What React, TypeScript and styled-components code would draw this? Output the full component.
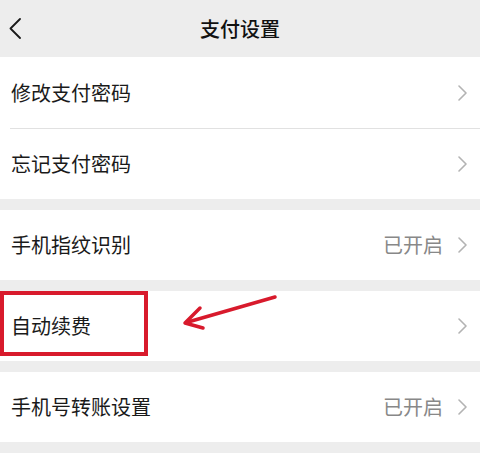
import React from 'react';
import styled, { createGlobalStyle } from 'styled-components';

const GlobalStyle = createGlobalStyle`
    html, body {
        margin: 0;
        padding: 0;
        background-color: #ffffff;
        font-family: "Noto Sans CJK SC", "Noto Sans", sans-serif;
    }
`;

const Page = styled.div`
    width: 480px;
    background-color: #ededed;
    padding-bottom: 11px;
`;

const Header = styled.div`
    height: 57px;
    display: grid;
    grid-template-columns: 1fr auto 1fr;
    align-items: center;
    background-color: #ededed;
`;

const BackButton = styled.div`
    display: flex;
    align-items: center;
    padding-left: 9px;
    height: 100%;
`;

const Title = styled.div`
    font-size: 20px;
    font-weight: 500;
    color: #111111;
    line-height: 1;
`;

const Group = styled.div`
    background-color: #ffffff;
    & + & {
        margin-top: 11px;
    }
`;

const Divider = styled.div`
    height: 1px;
    margin-left: 10px;
    background-color: #e1e1e1;
`;

const Row = styled.div<{ $first?: boolean }>`
    position: relative;
    height: ${(p) => (p.$first ? 71 : 70)}px;
    display: flex;
    align-items: center;
    padding: 0 13px 0 11px;
`;

const Label = styled.div`
    flex: 1;
    font-size: 20px;
    color: #1a1a1a;
    line-height: 1;
`;

const Status = styled.div`
    font-size: 20px;
    color: #888888;
    line-height: 1;
    margin-right: 15px;
`;

const Highlight = styled.div`
    position: absolute;
    left: 0;
    top: 0;
    width: 148px;
    height: 65px;
    box-sizing: border-box;
    border: 4px solid #d81a2c;
`;

const ArrowMark = styled.svg`
    position: absolute;
    left: 0;
    top: 0;
    pointer-events: none;
`;

const Chevron = () => (
    <svg width="9" height="16" viewBox="0 0 9 16">
        <polyline
            points="1,1 8,8 1,15"
            fill="none"
            stroke="#b3b3b3"
            strokeWidth="1.6"
            strokeLinecap="round"
            strokeLinejoin="round"
        />
    </svg>
);

const BackIcon = () => (
    <svg width="12" height="21" viewBox="0 0 12 21">
        <polyline
            points="11,1 1.5,10.5 11,20"
            fill="none"
            stroke="#1a1a1a"
            strokeWidth="1.8"
            strokeLinecap="round"
            strokeLinejoin="round"
        />
    </svg>
);

interface Item {
    label: string;
    status?: string;
    marked?: boolean;
}

const groups: Item[][] = [
    [{ label: '修改支付密码' }, { label: '忘记支付密码' }],
    [{ label: '手机指纹识别', status: '已开启' }],
    [{ label: '自动续费', marked: true }],
    [{ label: '手机号转账设置', status: '已开启' }]
];

const App: React.FunctionComponent = () => {
    return (
        <>
            <GlobalStyle />
            <Page>
                <Header>
                    <BackButton>
                        <BackIcon />
                    </BackButton>
                    <Title>支付设置</Title>
                    <div />
                </Header>
                {groups.map((items, gi) => (
                    <Group key={gi}>
                        {items.map((item, i) => (
                            <React.Fragment key={item.label}>
                                {i > 0 && <Divider />}
                                <Row $first={gi === 0 && i === 0}>
                                    <Label>{item.label}</Label>
                                    {item.status && <Status>{item.status}</Status>}
                                    <Chevron />
                                    {item.marked && (
                                        <>
                                            <Highlight />
                                            <ArrowMark width="290" height="45" viewBox="0 0 290 45">
                                                <line
                                                    x1="275"
                                                    y1="6"
                                                    x2="188"
                                                    y2="31"
                                                    stroke="#d81a2c"
                                                    strokeWidth="3.5"
                                                    strokeLinecap="round"
                                                />
                                                <polyline
                                                    points="200,17 185,32 203,37"
                                                    fill="none"
                                                    stroke="#d81a2c"
                                                    strokeWidth="3.5"
                                                    strokeLinecap="round"
                                                    strokeLinejoin="round"
                                                />
                                            </ArrowMark>
                                        </>
                                    )}
                                </Row>
                            </React.Fragment>
                        ))}
                    </Group>
                ))}
            </Page>
        </>
    );
};

export default App;
